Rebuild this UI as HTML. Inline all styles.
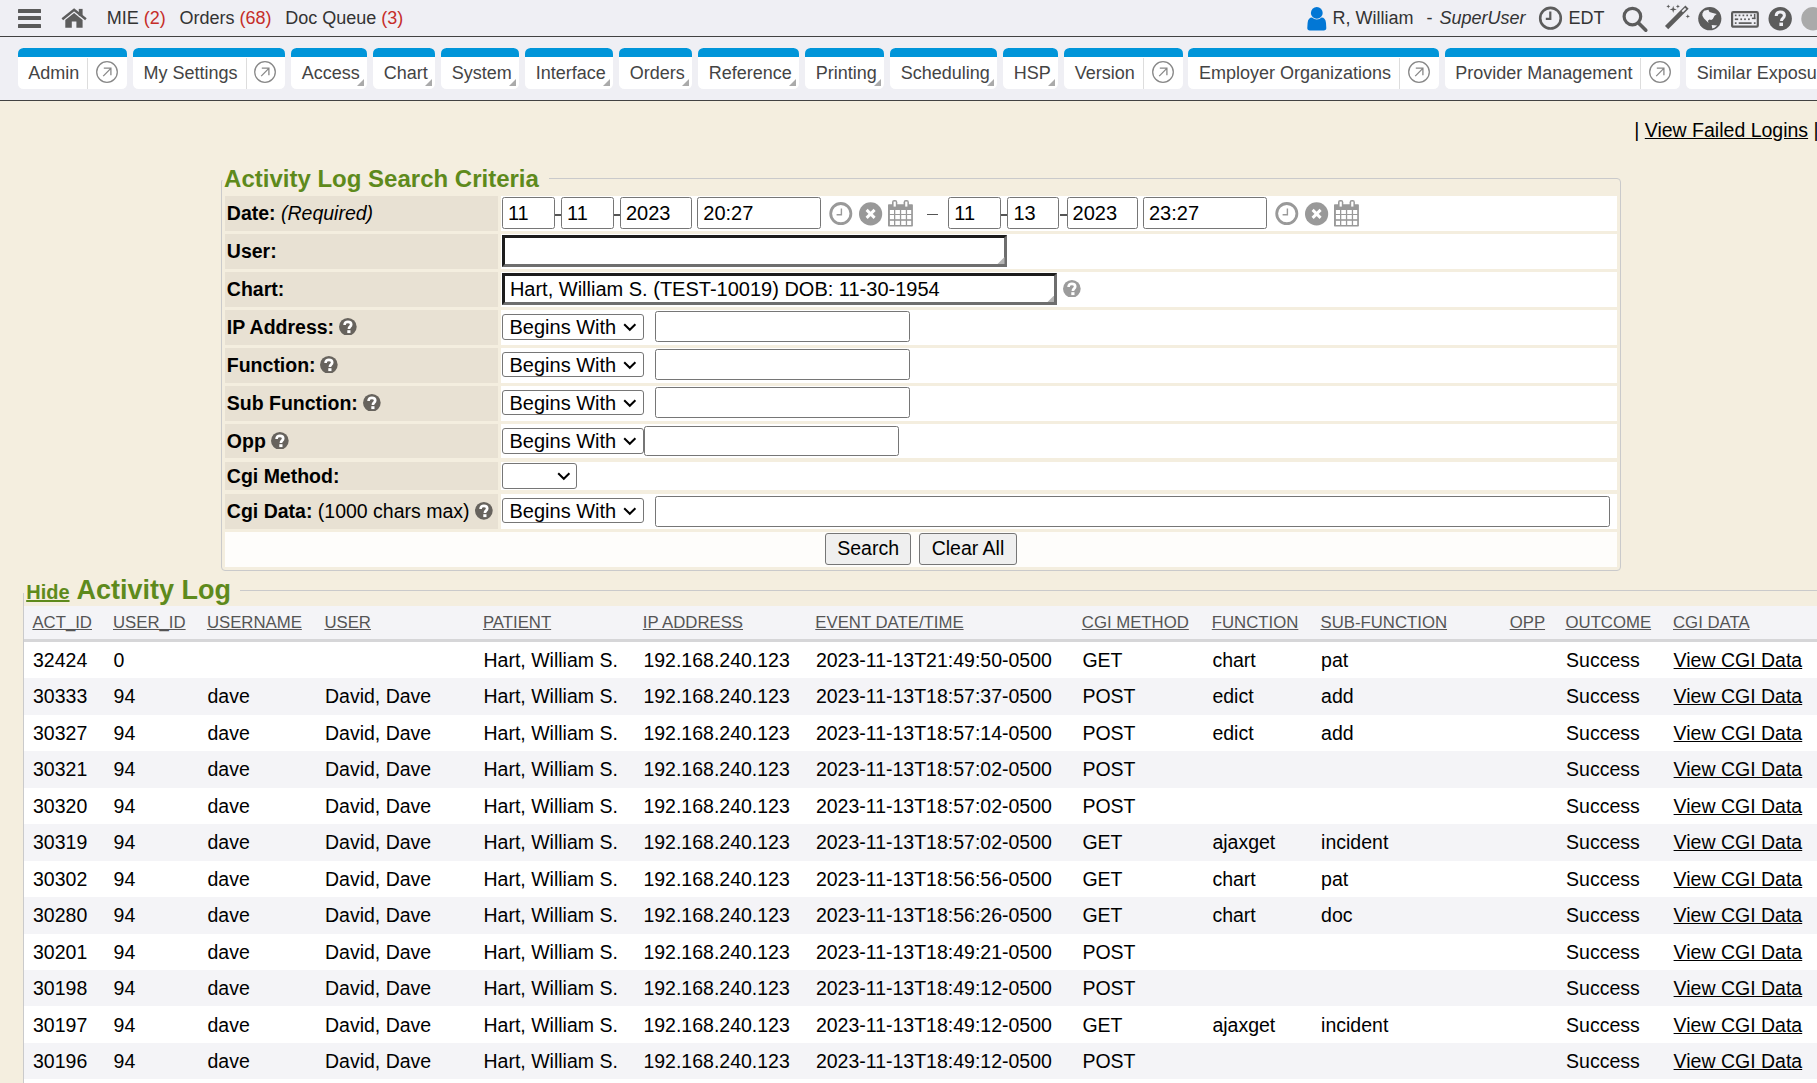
<!DOCTYPE html><html><head><meta charset="utf-8"><style>
html,body{margin:0;padding:0;}
body{width:1817px;height:1083px;overflow:hidden;position:relative;background:#f4eedf;font-family:'Liberation Sans', sans-serif;}
</style></head><body>
<div style="position:absolute;left:0.00px;top:0.00px;width:1817.00px;height:36.00px;background:#efeff4"></div>
<div style="position:absolute;left:0.00px;top:36.00px;width:1817.00px;height:1.00px;background:#424242"></div>
<div style="position:absolute;left:0.00px;top:37.00px;width:1817.00px;height:63.00px;background:#efeff4"></div>
<div style="position:absolute;left:0.00px;top:100.00px;width:1817.00px;height:1.00px;background:#424242"></div>
<div style="position:absolute;left:18.00px;top:9.00px;width:23.00px;height:3.60px;background:#5a5a5a;border-radius:0.6px"></div>
<div style="position:absolute;left:18.00px;top:16.20px;width:23.00px;height:3.60px;background:#5a5a5a;border-radius:0.6px"></div>
<div style="position:absolute;left:18.00px;top:24.10px;width:23.00px;height:3.60px;background:#5a5a5a;border-radius:0.6px"></div>
<svg style="position:absolute;left:56.00px;top:4.00px" width="36" height="28" viewBox="0 0 36 28"><path d="M6.3 15.2 L18.1 5.8 L29.9 15.2" fill="none" stroke="#5d5d5d" stroke-width="2.5"/><rect x="22.8" y="4.9" width="3.8" height="6.8" fill="#5d5d5d"/><path fill="#5d5d5d" d="M9.3 16.0 L18.1 9.0 L26.6 16.0 L26.6 23.8 L20.4 23.8 L20.4 17.6 L15.8 17.6 L15.8 23.8 L9.3 23.8 Z"/></svg>
<div style="position:absolute;left:106.70px;top:7.90px;font-size:18px;line-height:20px;font-weight:normal;font-style:normal;color:#333333;white-space:pre;">MIE <span style="color:#c62d28">(2)</span></div>
<div style="position:absolute;left:179.50px;top:7.90px;font-size:18px;line-height:20px;font-weight:normal;font-style:normal;color:#333333;white-space:pre;">Orders <span style="color:#c62d28">(68)</span></div>
<div style="position:absolute;left:285.30px;top:7.90px;font-size:18px;line-height:20px;font-weight:normal;font-style:normal;color:#333333;white-space:pre;">Doc Queue <span style="color:#c62d28">(3)</span></div>
<svg style="position:absolute;left:1307.00px;top:6.50px" width="20" height="24" viewBox="0 0 20 24"><circle cx="9.8" cy="5.9" r="5.9" fill="#0277d5"/><path fill="#0277d5" d="M0.3 21 L0.6 16 C0.9 12.5 2.5 10.6 5 10.6 C6.6 11.9 8 12.5 9.8 12.5 C11.6 12.5 13 11.9 14.6 10.6 C17.1 10.6 18.7 12.5 19 16 L19.3 21 C19.4 22.6 18.4 23.4 16.8 23.4 L2.8 23.4 C1.2 23.4 0.2 22.6 0.3 21 Z"/></svg>
<div style="position:absolute;left:1332.40px;top:7.80px;font-size:18px;line-height:20px;font-weight:normal;font-style:normal;color:#333333;white-space:pre;">R, William</div>
<div style="position:absolute;left:1426.50px;top:7.80px;font-size:18px;line-height:20px;font-weight:normal;font-style:normal;color:#333333;white-space:pre;">-</div>
<div style="position:absolute;left:1439.50px;top:7.80px;font-size:18px;line-height:20px;font-weight:normal;font-style:normal;color:#333333;white-space:pre;"><i>SuperUser</i></div>
<svg style="position:absolute;left:1538.00px;top:6.00px" width="26" height="26" viewBox="0 0 26 26"><circle cx="12.5" cy="12.2" r="10.3" fill="none" stroke="#5c5c5c" stroke-width="2.6"/><path d="M12.3 5.5 V12.8 H7.8" fill="none" stroke="#5c5c5c" stroke-width="2.2"/></svg>
<div style="position:absolute;left:1568.50px;top:8.00px;font-size:18px;line-height:20px;font-weight:normal;font-style:normal;color:#333333;white-space:pre;">EDT</div>
<svg style="position:absolute;left:1622.00px;top:6.00px" width="27" height="27" viewBox="0 0 27 27"><circle cx="10.4" cy="10.6" r="8.3" fill="none" stroke="#5c5c5c" stroke-width="3.2"/><path d="M16.5 17 L23.8 24.2" stroke="#5c5c5c" stroke-width="3.6" stroke-linecap="round"/></svg>
<svg style="position:absolute;left:1660.00px;top:0.00px" width="32" height="32" viewBox="0 0 32 32"><path d="M6.6 27.6 L27 7.2" stroke="#5c5c5c" stroke-width="4.6"/><path d="M22.3 11.7 L25.6 8.4" stroke="#efeff4" stroke-width="1.9"/><path fill="#5c5c5c" d="M13.2 5.800000000000001 L14.0 8.6 L16.8 9.4 L14.0 10.200000000000001 L13.2 13.0 L12.399999999999999 10.200000000000001 L9.6 9.4 L12.399999999999999 8.6 Z"/><path fill="#5c5c5c" d="M8.3 4.4 L8.850000000000001 5.8500000000000005 L10.3 6.4 L8.850000000000001 6.95 L8.3 8.4 L7.750000000000001 6.95 L6.300000000000001 6.4 L7.750000000000001 5.8500000000000005 Z"/><path fill="#5c5c5c" d="M17.9 4.4 L18.45 5.8500000000000005 L19.9 6.4 L18.45 6.95 L17.9 8.4 L17.349999999999998 6.95 L15.899999999999999 6.4 L17.349999999999998 5.8500000000000005 Z"/><path fill="#5c5c5c" d="M27.8 14.2 L28.400000000000002 15.799999999999999 L30.0 16.4 L28.400000000000002 17.0 L27.8 18.599999999999998 L27.2 17.0 L25.6 16.4 L27.2 15.799999999999999 Z"/></svg>
<svg style="position:absolute;left:1698.00px;top:6.50px" width="24" height="24" viewBox="0 0 24 24"><circle cx="11.8" cy="11.7" r="11.6" fill="#5c5c5c"/><path fill="#efeff4" d="M4.4 6.5 L6.0 3.8 L10.4 2.7 L11.5 4.9 L14.8 6.0 L18.7 7.1 L16.5 8.7 L14.8 12.0 L13.2 13.1 L11.5 12.6 L9.9 13.7 L10.6 15.9 L8.8 14.2 L6.0 11.5 L4.4 8.7 Z M13.7 18.1 L19.2 18.6 L16.5 20.8 L14.3 21.6 Z"/></svg>
<svg style="position:absolute;left:1730.00px;top:10.80px" width="31" height="18" viewBox="0 0 31 18"><rect x="2.1" y="1.1" width="25.7" height="14.6" rx="1.2" fill="none" stroke="#5c5c5c" stroke-width="2.2"/><g fill="#5c5c5c"><rect x="4.8500000000000005" y="3.55" width="1.7" height="1.7"/><rect x="8.65" y="3.55" width="1.7" height="1.7"/><rect x="12.55" y="3.55" width="1.7" height="1.7"/><rect x="16.349999999999998" y="3.55" width="1.7" height="1.7"/><rect x="20.25" y="3.55" width="1.7" height="1.7"/><rect x="23.9" y="2.9" width="1.5" height="5.2"/><rect x="21.9" y="6.6" width="3.5" height="1.5"/><rect x="4.8" y="7.4" width="3.4" height="1.7"/><rect x="10.35" y="7.4" width="1.7" height="1.7"/><rect x="14.15" y="7.4" width="1.7" height="1.7"/><rect x="18.049999999999997" y="7.4" width="1.7" height="1.7"/><rect x="4.85" y="11.25" width="1.7" height="1.7"/><rect x="8.7" y="11.25" width="12.9" height="1.7"/><rect x="23.85" y="11.25" width="1.7" height="1.7"/></g></svg>
<svg style="position:absolute;left:1768.00px;top:6.50px" width="25" height="24" viewBox="0 0 25 24"><circle cx="12.2" cy="11.8" r="11.7" fill="#5c5c5c"/><path d="M8.2 9 C8.2 6.2 10 5 12.3 5 C14.8 5 16.4 6.5 16.4 8.6 C16.4 11 13.6 11.5 13.6 13.2 L13.6 14" fill="none" stroke="#efeff4" stroke-width="3"/><rect x="11.4" y="15.6" width="3.6" height="3.4" fill="#efeff4"/></svg>
<svg style="position:absolute;left:1800.00px;top:6.50px" width="17" height="24" viewBox="0 0 17 24"><circle cx="13" cy="11.8" r="11.7" fill="#aaaaaa"/></svg>
<div style="position:absolute;left:17.70px;top:47.5px;width:109.43px;height:41.40px;background:#fff;border-radius:5.5px;overflow:hidden"><div style="position:absolute;left:0;top:0;right:0;height:9.50px;background:#0095d9"></div></div>
<div style="position:absolute;left:28.20px;top:63.00px;font-size:18px;line-height:20px;font-weight:normal;font-style:normal;color:#444444;white-space:pre;">Admin</div>
<div style="position:absolute;left:87.23px;top:58.00px;width:1.00px;height:30.90px;background:#dddddd"></div>
<svg style="position:absolute;left:95.03px;top:60.00px" width="24" height="24" viewBox="0 0 24 24"><circle cx="12" cy="12" r="10.3" fill="none" stroke="#888888" stroke-width="1.3"/><path d="M8.2 16.1 L15.6 8.6 M8.8 8.2 H15.9 V15.3" fill="none" stroke="#888888" stroke-width="1.3"/></svg>
<div style="position:absolute;left:132.98px;top:47.5px;width:152.45px;height:41.40px;background:#fff;border-radius:5.5px;overflow:hidden"><div style="position:absolute;left:0;top:0;right:0;height:9.50px;background:#0095d9"></div></div>
<div style="position:absolute;left:143.48px;top:63.00px;font-size:18px;line-height:20px;font-weight:normal;font-style:normal;color:#444444;white-space:pre;">My Settings</div>
<div style="position:absolute;left:245.53px;top:58.00px;width:1.00px;height:30.90px;background:#dddddd"></div>
<svg style="position:absolute;left:253.33px;top:60.00px" width="24" height="24" viewBox="0 0 24 24"><circle cx="12" cy="12" r="10.3" fill="none" stroke="#888888" stroke-width="1.3"/><path d="M8.2 16.1 L15.6 8.6 M8.8 8.2 H15.9 V15.3" fill="none" stroke="#888888" stroke-width="1.3"/></svg>
<div style="position:absolute;left:291.28px;top:47.5px;width:76.13px;height:41.40px;background:#fff;border-radius:5.5px;overflow:hidden"><div style="position:absolute;left:0;top:0;right:0;height:9.50px;background:#0095d9"></div></div>
<div style="position:absolute;left:301.78px;top:63.00px;font-size:18px;line-height:20px;font-weight:normal;font-style:normal;color:#444444;white-space:pre;">Access</div>
<svg style="position:absolute;left:357.41px;top:79.00px" width="7" height="7" viewBox="0 0 7 7"><path d="M7 0 L7 7 L0 7 Z" fill="#aaaaaa"/></svg>
<div style="position:absolute;left:373.26px;top:47.5px;width:62.12px;height:41.40px;background:#fff;border-radius:5.5px;overflow:hidden"><div style="position:absolute;left:0;top:0;right:0;height:9.50px;background:#0095d9"></div></div>
<div style="position:absolute;left:383.76px;top:63.00px;font-size:18px;line-height:20px;font-weight:normal;font-style:normal;color:#444444;white-space:pre;">Chart</div>
<svg style="position:absolute;left:425.38px;top:79.00px" width="7" height="7" viewBox="0 0 7 7"><path d="M7 0 L7 7 L0 7 Z" fill="#aaaaaa"/></svg>
<div style="position:absolute;left:441.23px;top:47.5px;width:78.12px;height:41.40px;background:#fff;border-radius:5.5px;overflow:hidden"><div style="position:absolute;left:0;top:0;right:0;height:9.50px;background:#0095d9"></div></div>
<div style="position:absolute;left:451.73px;top:63.00px;font-size:18px;line-height:20px;font-weight:normal;font-style:normal;color:#444444;white-space:pre;">System</div>
<svg style="position:absolute;left:509.35px;top:79.00px" width="7" height="7" viewBox="0 0 7 7"><path d="M7 0 L7 7 L0 7 Z" fill="#aaaaaa"/></svg>
<div style="position:absolute;left:525.20px;top:47.5px;width:88.15px;height:41.40px;background:#fff;border-radius:5.5px;overflow:hidden"><div style="position:absolute;left:0;top:0;right:0;height:9.50px;background:#0095d9"></div></div>
<div style="position:absolute;left:535.70px;top:63.00px;font-size:18px;line-height:20px;font-weight:normal;font-style:normal;color:#444444;white-space:pre;">Interface</div>
<svg style="position:absolute;left:603.35px;top:79.00px" width="7" height="7" viewBox="0 0 7 7"><path d="M7 0 L7 7 L0 7 Z" fill="#aaaaaa"/></svg>
<div style="position:absolute;left:619.20px;top:47.5px;width:73.12px;height:41.40px;background:#fff;border-radius:5.5px;overflow:hidden"><div style="position:absolute;left:0;top:0;right:0;height:9.50px;background:#0095d9"></div></div>
<div style="position:absolute;left:629.70px;top:63.00px;font-size:18px;line-height:20px;font-weight:normal;font-style:normal;color:#444444;white-space:pre;">Orders</div>
<svg style="position:absolute;left:682.32px;top:79.00px" width="7" height="7" viewBox="0 0 7 7"><path d="M7 0 L7 7 L0 7 Z" fill="#aaaaaa"/></svg>
<div style="position:absolute;left:698.17px;top:47.5px;width:101.16px;height:41.40px;background:#fff;border-radius:5.5px;overflow:hidden"><div style="position:absolute;left:0;top:0;right:0;height:9.50px;background:#0095d9"></div></div>
<div style="position:absolute;left:708.67px;top:63.00px;font-size:18px;line-height:20px;font-weight:normal;font-style:normal;color:#444444;white-space:pre;">Reference</div>
<svg style="position:absolute;left:789.33px;top:79.00px" width="7" height="7" viewBox="0 0 7 7"><path d="M7 0 L7 7 L0 7 Z" fill="#aaaaaa"/></svg>
<div style="position:absolute;left:805.18px;top:47.5px;width:79.13px;height:41.40px;background:#fff;border-radius:5.5px;overflow:hidden"><div style="position:absolute;left:0;top:0;right:0;height:9.50px;background:#0095d9"></div></div>
<div style="position:absolute;left:815.68px;top:63.00px;font-size:18px;line-height:20px;font-weight:normal;font-style:normal;color:#444444;white-space:pre;">Printing</div>
<svg style="position:absolute;left:874.31px;top:79.00px" width="7" height="7" viewBox="0 0 7 7"><path d="M7 0 L7 7 L0 7 Z" fill="#aaaaaa"/></svg>
<div style="position:absolute;left:890.16px;top:47.5px;width:107.18px;height:41.40px;background:#fff;border-radius:5.5px;overflow:hidden"><div style="position:absolute;left:0;top:0;right:0;height:9.50px;background:#0095d9"></div></div>
<div style="position:absolute;left:900.66px;top:63.00px;font-size:18px;line-height:20px;font-weight:normal;font-style:normal;color:#444444;white-space:pre;">Scheduling</div>
<svg style="position:absolute;left:987.34px;top:79.00px" width="7" height="7" viewBox="0 0 7 7"><path d="M7 0 L7 7 L0 7 Z" fill="#aaaaaa"/></svg>
<div style="position:absolute;left:1003.19px;top:47.5px;width:55.12px;height:41.40px;background:#fff;border-radius:5.5px;overflow:hidden"><div style="position:absolute;left:0;top:0;right:0;height:9.50px;background:#0095d9"></div></div>
<div style="position:absolute;left:1013.69px;top:63.00px;font-size:18px;line-height:20px;font-weight:normal;font-style:normal;color:#444444;white-space:pre;">HSP</div>
<svg style="position:absolute;left:1048.31px;top:79.00px" width="7" height="7" viewBox="0 0 7 7"><path d="M7 0 L7 7 L0 7 Z" fill="#aaaaaa"/></svg>
<div style="position:absolute;left:1064.16px;top:47.5px;width:118.45px;height:41.40px;background:#fff;border-radius:5.5px;overflow:hidden"><div style="position:absolute;left:0;top:0;right:0;height:9.50px;background:#0095d9"></div></div>
<div style="position:absolute;left:1074.66px;top:63.00px;font-size:18px;line-height:20px;font-weight:normal;font-style:normal;color:#444444;white-space:pre;">Version</div>
<div style="position:absolute;left:1142.71px;top:58.00px;width:1.00px;height:30.90px;background:#dddddd"></div>
<svg style="position:absolute;left:1150.51px;top:60.00px" width="24" height="24" viewBox="0 0 24 24"><circle cx="12" cy="12" r="10.3" fill="none" stroke="#888888" stroke-width="1.3"/><path d="M8.2 16.1 L15.6 8.6 M8.8 8.2 H15.9 V15.3" fill="none" stroke="#888888" stroke-width="1.3"/></svg>
<div style="position:absolute;left:1188.46px;top:47.5px;width:250.49px;height:41.40px;background:#fff;border-radius:5.5px;overflow:hidden"><div style="position:absolute;left:0;top:0;right:0;height:9.50px;background:#0095d9"></div></div>
<div style="position:absolute;left:1198.96px;top:63.00px;font-size:18px;line-height:20px;font-weight:normal;font-style:normal;color:#444444;white-space:pre;">Employer Organizations</div>
<div style="position:absolute;left:1399.05px;top:58.00px;width:1.00px;height:30.90px;background:#dddddd"></div>
<svg style="position:absolute;left:1406.85px;top:60.00px" width="24" height="24" viewBox="0 0 24 24"><circle cx="12" cy="12" r="10.3" fill="none" stroke="#888888" stroke-width="1.3"/><path d="M8.2 16.1 L15.6 8.6 M8.8 8.2 H15.9 V15.3" fill="none" stroke="#888888" stroke-width="1.3"/></svg>
<div style="position:absolute;left:1444.80px;top:47.5px;width:235.49px;height:41.40px;background:#fff;border-radius:5.5px;overflow:hidden"><div style="position:absolute;left:0;top:0;right:0;height:9.50px;background:#0095d9"></div></div>
<div style="position:absolute;left:1455.30px;top:63.00px;font-size:18px;line-height:20px;font-weight:normal;font-style:normal;color:#444444;white-space:pre;">Provider Management</div>
<div style="position:absolute;left:1640.39px;top:58.00px;width:1.00px;height:30.90px;background:#dddddd"></div>
<svg style="position:absolute;left:1648.19px;top:60.00px" width="24" height="24" viewBox="0 0 24 24"><circle cx="12" cy="12" r="10.3" fill="none" stroke="#888888" stroke-width="1.3"/><path d="M8.2 16.1 L15.6 8.6 M8.8 8.2 H15.9 V15.3" fill="none" stroke="#888888" stroke-width="1.3"/></svg>
<div style="position:absolute;left:1686.14px;top:47.5px;width:203.45px;height:41.40px;background:#fff;border-radius:5.5px;overflow:hidden"><div style="position:absolute;left:0;top:0;right:0;height:9.50px;background:#0095d9"></div></div>
<div style="position:absolute;left:1696.64px;top:63.00px;font-size:18px;line-height:20px;font-weight:normal;font-style:normal;color:#444444;white-space:pre;">Similar Exposures</div>
<div style="position:absolute;left:1849.69px;top:58.00px;width:1.00px;height:30.90px;background:#dddddd"></div>
<svg style="position:absolute;left:1857.49px;top:60.00px" width="24" height="24" viewBox="0 0 24 24"><circle cx="12" cy="12" r="10.3" fill="none" stroke="#888888" stroke-width="1.3"/><path d="M8.2 16.1 L15.6 8.6 M8.8 8.2 H15.9 V15.3" fill="none" stroke="#888888" stroke-width="1.3"/></svg>
<div style="position:absolute;left:1634.30px;top:118.60px;font-size:19.5px;line-height:22px;font-weight:normal;font-style:normal;color:#000;white-space:pre;">| <span style="text-decoration:underline">View Failed Logins</span> |</div>
<div style="position:absolute;left:221px;top:178px;width:1398.4px;height:390.6px;border:1px solid #cacacb;border-radius:4px"></div>
<div style="position:absolute;left:218.00px;top:165.00px;width:331.00px;height:15.00px;background:#f4eedf"></div>
<div style="position:absolute;left:224.10px;top:164.70px;font-size:24px;line-height:27px;font-weight:bold;font-style:normal;color:#5e8a1c;white-space:pre;">Activity Log Search Criteria</div>
<div style="position:absolute;left:225.00px;top:196.00px;width:273.00px;height:35.00px;background:#e8e1d3"></div>
<div style="position:absolute;left:501.20px;top:196.00px;width:1115.80px;height:35.00px;background:#ffffff"></div>
<div style="position:absolute;left:225.00px;top:234.20px;width:273.00px;height:34.40px;background:#e8e1d3"></div>
<div style="position:absolute;left:501.20px;top:234.20px;width:1115.80px;height:34.40px;background:#ffffff"></div>
<div style="position:absolute;left:225.00px;top:272.30px;width:273.00px;height:34.30px;background:#e8e1d3"></div>
<div style="position:absolute;left:501.20px;top:272.30px;width:1115.80px;height:34.30px;background:#ffffff"></div>
<div style="position:absolute;left:225.00px;top:310.30px;width:273.00px;height:34.40px;background:#e8e1d3"></div>
<div style="position:absolute;left:501.20px;top:310.30px;width:1115.80px;height:34.40px;background:#ffffff"></div>
<div style="position:absolute;left:225.00px;top:348.10px;width:273.00px;height:34.70px;background:#e8e1d3"></div>
<div style="position:absolute;left:501.20px;top:348.10px;width:1115.80px;height:34.70px;background:#ffffff"></div>
<div style="position:absolute;left:225.00px;top:386.10px;width:273.00px;height:34.50px;background:#e8e1d3"></div>
<div style="position:absolute;left:501.20px;top:386.10px;width:1115.80px;height:34.50px;background:#ffffff"></div>
<div style="position:absolute;left:225.00px;top:424.30px;width:273.00px;height:34.20px;background:#e8e1d3"></div>
<div style="position:absolute;left:501.20px;top:424.30px;width:1115.80px;height:34.20px;background:#ffffff"></div>
<div style="position:absolute;left:225.00px;top:462.10px;width:273.00px;height:28.30px;background:#e8e1d3"></div>
<div style="position:absolute;left:501.20px;top:462.10px;width:1115.80px;height:28.30px;background:#ffffff"></div>
<div style="position:absolute;left:225.00px;top:494.10px;width:273.00px;height:34.50px;background:#e8e1d3"></div>
<div style="position:absolute;left:501.20px;top:494.10px;width:1115.80px;height:34.50px;background:#ffffff"></div>
<div style="position:absolute;left:225.00px;top:531.70px;width:1392.00px;height:35.10px;background:#fefdfb"></div>
<div style="position:absolute;left:226.80px;top:201.80px;font-size:19.5px;line-height:22px;font-weight:normal;font-style:normal;color:#000;white-space:pre;"><b>Date:</b> <i>(Required)</i></div>
<div style="position:absolute;left:226.80px;top:240.00px;font-size:19.5px;line-height:22px;font-weight:normal;font-style:normal;color:#000;white-space:pre;"><b>User:</b></div>
<div style="position:absolute;left:226.80px;top:278.10px;font-size:19.5px;line-height:22px;font-weight:normal;font-style:normal;color:#000;white-space:pre;"><b>Chart:</b></div>
<div style="position:absolute;left:226.80px;top:316.10px;font-size:19.5px;line-height:22px;font-weight:normal;font-style:normal;color:#000;white-space:pre;"><b>IP Address:</b></div>
<svg style="position:absolute;left:339.20px;top:317.60px" width="17.7" height="17.7" viewBox="0 0 17.7 17.7"><circle cx="8.85" cy="8.85" r="8.85" fill="#67635d"/><path d="M5.6 6.9 C5.6 4.9 7 3.8 8.9 3.8 C10.9 3.8 12.2 5 12.2 6.6 C12.2 8.6 10 8.9 10 10.4 L10 11" fill="none" stroke="#fff" stroke-width="2.7"/><rect x="8.3" y="12.2" width="3.2" height="2.9" fill="#fff"/></svg>
<div style="position:absolute;left:226.80px;top:353.90px;font-size:19.5px;line-height:22px;font-weight:normal;font-style:normal;color:#000;white-space:pre;"><b>Function:</b></div>
<svg style="position:absolute;left:320.40px;top:355.60px" width="17.7" height="17.7" viewBox="0 0 17.7 17.7"><circle cx="8.85" cy="8.85" r="8.85" fill="#67635d"/><path d="M5.6 6.9 C5.6 4.9 7 3.8 8.9 3.8 C10.9 3.8 12.2 5 12.2 6.6 C12.2 8.6 10 8.9 10 10.4 L10 11" fill="none" stroke="#fff" stroke-width="2.7"/><rect x="8.3" y="12.2" width="3.2" height="2.9" fill="#fff"/></svg>
<div style="position:absolute;left:226.80px;top:391.90px;font-size:19.5px;line-height:22px;font-weight:normal;font-style:normal;color:#000;white-space:pre;"><b>Sub Function:</b></div>
<svg style="position:absolute;left:362.90px;top:393.60px" width="17.7" height="17.7" viewBox="0 0 17.7 17.7"><circle cx="8.85" cy="8.85" r="8.85" fill="#67635d"/><path d="M5.6 6.9 C5.6 4.9 7 3.8 8.9 3.8 C10.9 3.8 12.2 5 12.2 6.6 C12.2 8.6 10 8.9 10 10.4 L10 11" fill="none" stroke="#fff" stroke-width="2.7"/><rect x="8.3" y="12.2" width="3.2" height="2.9" fill="#fff"/></svg>
<div style="position:absolute;left:226.80px;top:430.10px;font-size:19.5px;line-height:22px;font-weight:normal;font-style:normal;color:#000;white-space:pre;"><b>Opp</b></div>
<svg style="position:absolute;left:271.00px;top:431.60px" width="17.7" height="17.7" viewBox="0 0 17.7 17.7"><circle cx="8.85" cy="8.85" r="8.85" fill="#67635d"/><path d="M5.6 6.9 C5.6 4.9 7 3.8 8.9 3.8 C10.9 3.8 12.2 5 12.2 6.6 C12.2 8.6 10 8.9 10 10.4 L10 11" fill="none" stroke="#fff" stroke-width="2.7"/><rect x="8.3" y="12.2" width="3.2" height="2.9" fill="#fff"/></svg>
<div style="position:absolute;left:226.80px;top:465.00px;font-size:19.5px;line-height:22px;font-weight:normal;font-style:normal;color:#000;white-space:pre;"><b>Cgi Method:</b></div>
<div style="position:absolute;left:226.80px;top:500.30px;font-size:19.5px;line-height:22px;font-weight:normal;font-style:normal;color:#000;white-space:pre;"><b>Cgi Data:</b> (1000 chars max)</div>
<svg style="position:absolute;left:475.00px;top:502.00px" width="17.7" height="17.7" viewBox="0 0 17.7 17.7"><circle cx="8.85" cy="8.85" r="8.85" fill="#67635d"/><path d="M5.6 6.9 C5.6 4.9 7 3.8 8.9 3.8 C10.9 3.8 12.2 5 12.2 6.6 C12.2 8.6 10 8.9 10 10.4 L10 11" fill="none" stroke="#fff" stroke-width="2.7"/><rect x="8.3" y="12.2" width="3.2" height="2.9" fill="#fff"/></svg>
<div style="position:absolute;left:501.90px;top:197.20px;width:52.90px;height:31.50px;box-sizing:border-box;background:#fff;border:1px solid #767676;border-radius:2.5px"></div>
<div style="position:absolute;left:507.90px;top:201.70px;font-size:20px;line-height:22px;font-weight:normal;font-style:normal;color:#000;white-space:pre;">11</div>
<div style="position:absolute;left:561.10px;top:197.20px;width:52.50px;height:31.50px;box-sizing:border-box;background:#fff;border:1px solid #767676;border-radius:2.5px"></div>
<div style="position:absolute;left:567.10px;top:201.70px;font-size:20px;line-height:22px;font-weight:normal;font-style:normal;color:#000;white-space:pre;">11</div>
<div style="position:absolute;left:620.00px;top:197.20px;width:71.50px;height:31.50px;box-sizing:border-box;background:#fff;border:1px solid #767676;border-radius:2.5px"></div>
<div style="position:absolute;left:626.00px;top:201.70px;font-size:20px;line-height:22px;font-weight:normal;font-style:normal;color:#000;white-space:pre;">2023</div>
<div style="position:absolute;left:554.80px;top:213.90px;width:6.30px;height:1.80px;background:#555"></div>
<div style="position:absolute;left:613.60px;top:213.90px;width:6.40px;height:1.80px;background:#555"></div>
<div style="position:absolute;left:697.30px;top:197.20px;width:123.30px;height:31.50px;box-sizing:border-box;background:#fff;border:1px solid #767676;border-radius:2.5px"></div>
<div style="position:absolute;left:703.30px;top:201.70px;font-size:20px;line-height:22px;font-weight:normal;font-style:normal;color:#000;white-space:pre;">20:27</div>
<svg style="position:absolute;left:829.00px;top:201.50px" width="24" height="24" viewBox="0 0 24 24"><circle cx="11.8" cy="11.6" r="10.1" fill="none" stroke="#999999" stroke-width="2.8"/><path d="M12.4 6.4 V12.7 H7.6" fill="none" stroke="#999999" stroke-width="1.4"/></svg>
<svg style="position:absolute;left:859.00px;top:201.50px" width="24" height="24" viewBox="0 0 24 24"><circle cx="11.6" cy="11.9" r="11.6" fill="#999999"/><path d="M7.6 7.9 L15.6 15.9 M15.6 7.9 L7.6 15.9" stroke="#fff" stroke-width="2.9"/></svg>
<svg style="position:absolute;left:888.40px;top:200.00px" width="25" height="27" viewBox="0 0 25 27"><rect x="0" y="4.2" width="24.9" height="22.4" rx="0.8" fill="#999999"/><rect x="1.9" y="10" width="4.10" height="4.00" fill="#fff"/><rect x="1.9" y="15" width="4.10" height="4.20" fill="#fff"/><rect x="1.9" y="20.8" width="4.10" height="4.20" fill="#fff"/><rect x="7.3" y="10" width="4.60" height="4.00" fill="#fff"/><rect x="7.3" y="15" width="4.60" height="4.20" fill="#fff"/><rect x="7.3" y="20.8" width="4.60" height="4.20" fill="#fff"/><rect x="13.2" y="10" width="4.60" height="4.00" fill="#fff"/><rect x="13.2" y="15" width="4.60" height="4.20" fill="#fff"/><rect x="13.2" y="20.8" width="4.60" height="4.20" fill="#fff"/><rect x="19.1" y="10" width="4.10" height="4.00" fill="#fff"/><rect x="19.1" y="15" width="4.10" height="4.20" fill="#fff"/><rect x="19.1" y="20.8" width="4.10" height="4.20" fill="#fff"/><rect x="4" y="0" width="5.3" height="7.6" rx="2.2" fill="#999999"/><rect x="5.6" y="1.6" width="2.2" height="5" fill="#fff"/><rect x="15.6" y="0" width="5.3" height="7.6" rx="2.2" fill="#999999"/><rect x="17.2" y="1.6" width="2.2" height="5" fill="#fff"/></svg>
<div style="position:absolute;left:927.00px;top:213.60px;width:10.50px;height:1.80px;background:#555"></div>
<div style="position:absolute;left:948.30px;top:197.20px;width:52.50px;height:31.50px;box-sizing:border-box;background:#fff;border:1px solid #767676;border-radius:2.5px"></div>
<div style="position:absolute;left:954.30px;top:201.70px;font-size:20px;line-height:22px;font-weight:normal;font-style:normal;color:#000;white-space:pre;">11</div>
<div style="position:absolute;left:1007.40px;top:197.20px;width:52.10px;height:31.50px;box-sizing:border-box;background:#fff;border:1px solid #767676;border-radius:2.5px"></div>
<div style="position:absolute;left:1013.40px;top:201.70px;font-size:20px;line-height:22px;font-weight:normal;font-style:normal;color:#000;white-space:pre;">13</div>
<div style="position:absolute;left:1066.60px;top:197.20px;width:71.00px;height:31.50px;box-sizing:border-box;background:#fff;border:1px solid #767676;border-radius:2.5px"></div>
<div style="position:absolute;left:1072.60px;top:201.70px;font-size:20px;line-height:22px;font-weight:normal;font-style:normal;color:#000;white-space:pre;">2023</div>
<div style="position:absolute;left:1000.80px;top:213.90px;width:6.60px;height:1.80px;background:#555"></div>
<div style="position:absolute;left:1059.50px;top:213.90px;width:7.10px;height:1.80px;background:#555"></div>
<div style="position:absolute;left:1143.00px;top:197.20px;width:124.00px;height:31.50px;box-sizing:border-box;background:#fff;border:1px solid #767676;border-radius:2.5px"></div>
<div style="position:absolute;left:1149.00px;top:201.70px;font-size:20px;line-height:22px;font-weight:normal;font-style:normal;color:#000;white-space:pre;">23:27</div>
<svg style="position:absolute;left:1274.70px;top:201.50px" width="24" height="24" viewBox="0 0 24 24"><circle cx="11.8" cy="11.6" r="10.1" fill="none" stroke="#999999" stroke-width="2.8"/><path d="M12.4 6.4 V12.7 H7.6" fill="none" stroke="#999999" stroke-width="1.4"/></svg>
<svg style="position:absolute;left:1305.40px;top:201.50px" width="24" height="24" viewBox="0 0 24 24"><circle cx="11.6" cy="11.9" r="11.6" fill="#999999"/><path d="M7.6 7.9 L15.6 15.9 M15.6 7.9 L7.6 15.9" stroke="#fff" stroke-width="2.9"/></svg>
<svg style="position:absolute;left:1334.00px;top:200.00px" width="25" height="27" viewBox="0 0 25 27"><rect x="0" y="4.2" width="24.9" height="22.4" rx="0.8" fill="#999999"/><rect x="1.9" y="10" width="4.10" height="4.00" fill="#fff"/><rect x="1.9" y="15" width="4.10" height="4.20" fill="#fff"/><rect x="1.9" y="20.8" width="4.10" height="4.20" fill="#fff"/><rect x="7.3" y="10" width="4.60" height="4.00" fill="#fff"/><rect x="7.3" y="15" width="4.60" height="4.20" fill="#fff"/><rect x="7.3" y="20.8" width="4.60" height="4.20" fill="#fff"/><rect x="13.2" y="10" width="4.60" height="4.00" fill="#fff"/><rect x="13.2" y="15" width="4.60" height="4.20" fill="#fff"/><rect x="13.2" y="20.8" width="4.60" height="4.20" fill="#fff"/><rect x="19.1" y="10" width="4.10" height="4.00" fill="#fff"/><rect x="19.1" y="15" width="4.10" height="4.20" fill="#fff"/><rect x="19.1" y="20.8" width="4.10" height="4.20" fill="#fff"/><rect x="4" y="0" width="5.3" height="7.6" rx="2.2" fill="#999999"/><rect x="5.6" y="1.6" width="2.2" height="5" fill="#fff"/><rect x="15.6" y="0" width="5.3" height="7.6" rx="2.2" fill="#999999"/><rect x="17.2" y="1.6" width="2.2" height="5" fill="#fff"/></svg>
<div style="position:absolute;left:501.9px;top:234.9px;width:505.1px;height:31.900000000000006px;box-sizing:border-box;background:#fff;border-style:solid;border-width:3px;border-color:#1c1c1c #6e6e6e #6e6e6e #1c1c1c"></div>
<svg style="position:absolute;left:997.00px;top:256.80px" width="7.5" height="7.5" viewBox="0 0 7.5 7.5"><path d="M7.5 0 L7.5 7.5 L0 7.5Z" fill="#b4b4b4"/></svg>
<div style="position:absolute;left:502.2px;top:273.1px;width:554.5999999999999px;height:31.599999999999966px;box-sizing:border-box;background:#fff;border-style:solid;border-width:3px;border-color:#1c1c1c #6e6e6e #6e6e6e #1c1c1c"></div>
<svg style="position:absolute;left:1046.80px;top:294.70px" width="7.5" height="7.5" viewBox="0 0 7.5 7.5"><path d="M7.5 0 L7.5 7.5 L0 7.5Z" fill="#b4b4b4"/></svg>
<div style="position:absolute;left:509.90px;top:278.10px;font-size:20px;line-height:22px;font-weight:normal;font-style:normal;color:#000;white-space:pre;">Hart, William S. (TEST-10019) DOB: 11-30-1954</div>
<svg style="position:absolute;left:1063.20px;top:279.60px" width="17.7" height="17.7" viewBox="0 0 17.7 17.7"><circle cx="8.85" cy="8.85" r="8.85" fill="#9c9c9c"/><path d="M5.6 6.9 C5.6 4.9 7 3.8 8.9 3.8 C10.9 3.8 12.2 5 12.2 6.6 C12.2 8.6 10 8.9 10 10.4 L10 11" fill="none" stroke="#fff" stroke-width="2.7"/><rect x="8.3" y="12.2" width="3.2" height="2.9" fill="#fff"/></svg>
<div style="position:absolute;left:502.00px;top:314.40px;width:141.50px;height:25.20px;box-sizing:border-box;background:#fff;border:1px solid #767676;border-radius:3px"></div>
<div style="position:absolute;left:509.50px;top:316.10px;font-size:20px;line-height:22px;font-weight:normal;font-style:normal;color:#000;white-space:pre;">Begins With</div>
<svg style="position:absolute;left:623.00px;top:322.90px" width="14" height="9" viewBox="0 0 14 9"><path d="M1.2 1.2 L6.8 6.8 L12.4 1.2" fill="none" stroke="#000" stroke-width="2"/></svg>
<div style="position:absolute;left:655.20px;top:311.30px;width:254.50px;height:31.10px;box-sizing:border-box;background:#fff;border:1px solid #767676;border-radius:2.5px"></div>
<div style="position:absolute;left:502.00px;top:352.20px;width:141.50px;height:25.20px;box-sizing:border-box;background:#fff;border:1px solid #767676;border-radius:3px"></div>
<div style="position:absolute;left:509.50px;top:353.90px;font-size:20px;line-height:22px;font-weight:normal;font-style:normal;color:#000;white-space:pre;">Begins With</div>
<svg style="position:absolute;left:623.00px;top:360.70px" width="14" height="9" viewBox="0 0 14 9"><path d="M1.2 1.2 L6.8 6.8 L12.4 1.2" fill="none" stroke="#000" stroke-width="2"/></svg>
<div style="position:absolute;left:655.20px;top:349.10px;width:254.50px;height:31.10px;box-sizing:border-box;background:#fff;border:1px solid #767676;border-radius:2.5px"></div>
<div style="position:absolute;left:502.00px;top:390.20px;width:141.50px;height:25.20px;box-sizing:border-box;background:#fff;border:1px solid #767676;border-radius:3px"></div>
<div style="position:absolute;left:509.50px;top:391.90px;font-size:20px;line-height:22px;font-weight:normal;font-style:normal;color:#000;white-space:pre;">Begins With</div>
<svg style="position:absolute;left:623.00px;top:398.70px" width="14" height="9" viewBox="0 0 14 9"><path d="M1.2 1.2 L6.8 6.8 L12.4 1.2" fill="none" stroke="#000" stroke-width="2"/></svg>
<div style="position:absolute;left:655.20px;top:387.10px;width:254.50px;height:31.10px;box-sizing:border-box;background:#fff;border:1px solid #767676;border-radius:2.5px"></div>
<div style="position:absolute;left:502.00px;top:428.40px;width:141.50px;height:25.20px;box-sizing:border-box;background:#fff;border:1px solid #767676;border-radius:3px"></div>
<div style="position:absolute;left:509.50px;top:430.10px;font-size:20px;line-height:22px;font-weight:normal;font-style:normal;color:#000;white-space:pre;">Begins With</div>
<svg style="position:absolute;left:623.00px;top:436.90px" width="14" height="9" viewBox="0 0 14 9"><path d="M1.2 1.2 L6.8 6.8 L12.4 1.2" fill="none" stroke="#000" stroke-width="2"/></svg>
<div style="position:absolute;left:643.80px;top:425.60px;width:254.80px;height:30.90px;box-sizing:border-box;background:#fff;border:1px solid #767676;border-radius:2.5px"></div>
<div style="position:absolute;left:502.00px;top:463.20px;width:75.30px;height:25.60px;box-sizing:border-box;background:#fff;border:1px solid #767676;border-radius:3px"></div>
<svg style="position:absolute;left:556.80px;top:471.70px" width="14" height="9" viewBox="0 0 14 9"><path d="M1.2 1.2 L6.8 6.8 L12.4 1.2" fill="none" stroke="#000" stroke-width="2"/></svg>
<div style="position:absolute;left:502.00px;top:498.20px;width:141.50px;height:25.20px;box-sizing:border-box;background:#fff;border:1px solid #767676;border-radius:3px"></div>
<div style="position:absolute;left:509.50px;top:499.90px;font-size:20px;line-height:22px;font-weight:normal;font-style:normal;color:#000;white-space:pre;">Begins With</div>
<svg style="position:absolute;left:623.00px;top:506.70px" width="14" height="9" viewBox="0 0 14 9"><path d="M1.2 1.2 L6.8 6.8 L12.4 1.2" fill="none" stroke="#000" stroke-width="2"/></svg>
<div style="position:absolute;left:655.00px;top:496.00px;width:955.00px;height:31.00px;box-sizing:border-box;background:#fff;border:1px solid #767676;border-radius:2.5px"></div>
<div style="position:absolute;left:824.9px;top:533.3px;width:86.39999999999998px;height:31.40000000000009px;box-sizing:border-box;background:#efefef;border:1px solid #767676;border-radius:3px;font-size:19.5px;line-height:29.40000000000009px;text-align:center;color:#000">Search</div>
<div style="position:absolute;left:919.1px;top:533.3px;width:97.79999999999995px;height:31.40000000000009px;box-sizing:border-box;background:#efefef;border:1px solid #767676;border-radius:3px;font-size:19.5px;line-height:29.40000000000009px;text-align:center;color:#000">Clear All</div>
<div style="position:absolute;left:23.00px;top:590.00px;width:1794.00px;height:493.00px;border-left:1px solid #cacacb;border-top:1px solid #cacacb;box-sizing:border-box"></div>
<div style="position:absolute;left:20.00px;top:575.00px;width:219.60px;height:17.50px;background:#f4eedf"></div>
<div style="position:absolute;left:26.20px;top:581.10px;font-size:20px;line-height:22px;font-weight:bold;font-style:normal;color:#5e8a1c;white-space:pre;"><span style="text-decoration:underline">Hide</span></div>
<div style="position:absolute;left:76.50px;top:574.80px;font-size:27px;line-height:30px;font-weight:bold;font-style:normal;color:#5e8a1c;white-space:pre;">Activity Log</div>
<div style="position:absolute;left:24.00px;top:606.00px;width:1793.00px;height:33.00px;background:#f4f4f7"></div>
<div style="position:absolute;left:24.00px;top:639.00px;width:1793.00px;height:3.00px;background:#d6d6d8"></div>
<div style="position:absolute;left:32.40px;top:613.20px;font-size:16.75px;line-height:19px;font-weight:normal;font-style:normal;color:#555555;white-space:pre;text-decoration:underline">ACT_ID</div>
<div style="position:absolute;left:113.00px;top:613.20px;font-size:16.75px;line-height:19px;font-weight:normal;font-style:normal;color:#555555;white-space:pre;text-decoration:underline">USER_ID</div>
<div style="position:absolute;left:206.90px;top:613.20px;font-size:16.75px;line-height:19px;font-weight:normal;font-style:normal;color:#555555;white-space:pre;text-decoration:underline">USERNAME</div>
<div style="position:absolute;left:324.40px;top:613.20px;font-size:16.75px;line-height:19px;font-weight:normal;font-style:normal;color:#555555;white-space:pre;text-decoration:underline">USER</div>
<div style="position:absolute;left:482.90px;top:613.20px;font-size:16.75px;line-height:19px;font-weight:normal;font-style:normal;color:#555555;white-space:pre;text-decoration:underline">PATIENT</div>
<div style="position:absolute;left:642.80px;top:613.20px;font-size:16.75px;line-height:19px;font-weight:normal;font-style:normal;color:#555555;white-space:pre;text-decoration:underline">IP ADDRESS</div>
<div style="position:absolute;left:815.30px;top:613.20px;font-size:16.75px;line-height:19px;font-weight:normal;font-style:normal;color:#555555;white-space:pre;text-decoration:underline">EVENT DATE/TIME</div>
<div style="position:absolute;left:1081.80px;top:613.20px;font-size:16.75px;line-height:19px;font-weight:normal;font-style:normal;color:#555555;white-space:pre;text-decoration:underline">CGI METHOD</div>
<div style="position:absolute;left:1211.80px;top:613.20px;font-size:16.75px;line-height:19px;font-weight:normal;font-style:normal;color:#555555;white-space:pre;text-decoration:underline">FUNCTION</div>
<div style="position:absolute;left:1320.50px;top:613.20px;font-size:16.75px;line-height:19px;font-weight:normal;font-style:normal;color:#555555;white-space:pre;text-decoration:underline">SUB-FUNCTION</div>
<div style="position:absolute;left:1509.70px;top:613.20px;font-size:16.75px;line-height:19px;font-weight:normal;font-style:normal;color:#555555;white-space:pre;text-decoration:underline">OPP</div>
<div style="position:absolute;left:1565.50px;top:613.20px;font-size:16.75px;line-height:19px;font-weight:normal;font-style:normal;color:#555555;white-space:pre;text-decoration:underline">OUTCOME</div>
<div style="position:absolute;left:1673.00px;top:613.20px;font-size:16.75px;line-height:19px;font-weight:normal;font-style:normal;color:#555555;white-space:pre;text-decoration:underline">CGI DATA</div>
<div style="position:absolute;left:24.00px;top:642.00px;width:1793.00px;height:441.00px;background:#ffffff"></div>
<div style="position:absolute;left:33.00px;top:649.00px;font-size:19.5px;line-height:22px;font-weight:normal;font-style:normal;color:#000;white-space:pre;">32424</div>
<div style="position:absolute;left:113.60px;top:649.00px;font-size:19.5px;line-height:22px;font-weight:normal;font-style:normal;color:#000;white-space:pre;">0</div>
<div style="position:absolute;left:483.50px;top:649.00px;font-size:19.5px;line-height:22px;font-weight:normal;font-style:normal;color:#000;white-space:pre;">Hart, William S.</div>
<div style="position:absolute;left:643.40px;top:649.00px;font-size:19.5px;line-height:22px;font-weight:normal;font-style:normal;color:#000;white-space:pre;">192.168.240.123</div>
<div style="position:absolute;left:815.90px;top:649.00px;font-size:19.5px;line-height:22px;font-weight:normal;font-style:normal;color:#000;white-space:pre;">2023-11-13T21:49:50-0500</div>
<div style="position:absolute;left:1082.40px;top:649.00px;font-size:19.5px;line-height:22px;font-weight:normal;font-style:normal;color:#000;white-space:pre;">GET</div>
<div style="position:absolute;left:1212.40px;top:649.00px;font-size:19.5px;line-height:22px;font-weight:normal;font-style:normal;color:#000;white-space:pre;">chart</div>
<div style="position:absolute;left:1321.10px;top:649.00px;font-size:19.5px;line-height:22px;font-weight:normal;font-style:normal;color:#000;white-space:pre;">pat</div>
<div style="position:absolute;left:1566.10px;top:649.00px;font-size:19.5px;line-height:22px;font-weight:normal;font-style:normal;color:#000;white-space:pre;">Success</div>
<div style="position:absolute;left:1673.60px;top:649.00px;font-size:19.5px;line-height:22px;font-weight:normal;font-style:normal;color:#000;white-space:pre;"><span style="text-decoration:underline">View CGI Data</span></div>
<div style="position:absolute;left:24.00px;top:678.45px;width:1793.00px;height:36.45px;background:#f4f4f7"></div>
<div style="position:absolute;left:33.00px;top:685.45px;font-size:19.5px;line-height:22px;font-weight:normal;font-style:normal;color:#000;white-space:pre;">30333</div>
<div style="position:absolute;left:113.60px;top:685.45px;font-size:19.5px;line-height:22px;font-weight:normal;font-style:normal;color:#000;white-space:pre;">94</div>
<div style="position:absolute;left:207.50px;top:685.45px;font-size:19.5px;line-height:22px;font-weight:normal;font-style:normal;color:#000;white-space:pre;">dave</div>
<div style="position:absolute;left:325.00px;top:685.45px;font-size:19.5px;line-height:22px;font-weight:normal;font-style:normal;color:#000;white-space:pre;">David, Dave</div>
<div style="position:absolute;left:483.50px;top:685.45px;font-size:19.5px;line-height:22px;font-weight:normal;font-style:normal;color:#000;white-space:pre;">Hart, William S.</div>
<div style="position:absolute;left:643.40px;top:685.45px;font-size:19.5px;line-height:22px;font-weight:normal;font-style:normal;color:#000;white-space:pre;">192.168.240.123</div>
<div style="position:absolute;left:815.90px;top:685.45px;font-size:19.5px;line-height:22px;font-weight:normal;font-style:normal;color:#000;white-space:pre;">2023-11-13T18:57:37-0500</div>
<div style="position:absolute;left:1082.40px;top:685.45px;font-size:19.5px;line-height:22px;font-weight:normal;font-style:normal;color:#000;white-space:pre;">POST</div>
<div style="position:absolute;left:1212.40px;top:685.45px;font-size:19.5px;line-height:22px;font-weight:normal;font-style:normal;color:#000;white-space:pre;">edict</div>
<div style="position:absolute;left:1321.10px;top:685.45px;font-size:19.5px;line-height:22px;font-weight:normal;font-style:normal;color:#000;white-space:pre;">add</div>
<div style="position:absolute;left:1566.10px;top:685.45px;font-size:19.5px;line-height:22px;font-weight:normal;font-style:normal;color:#000;white-space:pre;">Success</div>
<div style="position:absolute;left:1673.60px;top:685.45px;font-size:19.5px;line-height:22px;font-weight:normal;font-style:normal;color:#000;white-space:pre;"><span style="text-decoration:underline">View CGI Data</span></div>
<div style="position:absolute;left:33.00px;top:721.90px;font-size:19.5px;line-height:22px;font-weight:normal;font-style:normal;color:#000;white-space:pre;">30327</div>
<div style="position:absolute;left:113.60px;top:721.90px;font-size:19.5px;line-height:22px;font-weight:normal;font-style:normal;color:#000;white-space:pre;">94</div>
<div style="position:absolute;left:207.50px;top:721.90px;font-size:19.5px;line-height:22px;font-weight:normal;font-style:normal;color:#000;white-space:pre;">dave</div>
<div style="position:absolute;left:325.00px;top:721.90px;font-size:19.5px;line-height:22px;font-weight:normal;font-style:normal;color:#000;white-space:pre;">David, Dave</div>
<div style="position:absolute;left:483.50px;top:721.90px;font-size:19.5px;line-height:22px;font-weight:normal;font-style:normal;color:#000;white-space:pre;">Hart, William S.</div>
<div style="position:absolute;left:643.40px;top:721.90px;font-size:19.5px;line-height:22px;font-weight:normal;font-style:normal;color:#000;white-space:pre;">192.168.240.123</div>
<div style="position:absolute;left:815.90px;top:721.90px;font-size:19.5px;line-height:22px;font-weight:normal;font-style:normal;color:#000;white-space:pre;">2023-11-13T18:57:14-0500</div>
<div style="position:absolute;left:1082.40px;top:721.90px;font-size:19.5px;line-height:22px;font-weight:normal;font-style:normal;color:#000;white-space:pre;">POST</div>
<div style="position:absolute;left:1212.40px;top:721.90px;font-size:19.5px;line-height:22px;font-weight:normal;font-style:normal;color:#000;white-space:pre;">edict</div>
<div style="position:absolute;left:1321.10px;top:721.90px;font-size:19.5px;line-height:22px;font-weight:normal;font-style:normal;color:#000;white-space:pre;">add</div>
<div style="position:absolute;left:1566.10px;top:721.90px;font-size:19.5px;line-height:22px;font-weight:normal;font-style:normal;color:#000;white-space:pre;">Success</div>
<div style="position:absolute;left:1673.60px;top:721.90px;font-size:19.5px;line-height:22px;font-weight:normal;font-style:normal;color:#000;white-space:pre;"><span style="text-decoration:underline">View CGI Data</span></div>
<div style="position:absolute;left:24.00px;top:751.35px;width:1793.00px;height:36.45px;background:#f4f4f7"></div>
<div style="position:absolute;left:33.00px;top:758.35px;font-size:19.5px;line-height:22px;font-weight:normal;font-style:normal;color:#000;white-space:pre;">30321</div>
<div style="position:absolute;left:113.60px;top:758.35px;font-size:19.5px;line-height:22px;font-weight:normal;font-style:normal;color:#000;white-space:pre;">94</div>
<div style="position:absolute;left:207.50px;top:758.35px;font-size:19.5px;line-height:22px;font-weight:normal;font-style:normal;color:#000;white-space:pre;">dave</div>
<div style="position:absolute;left:325.00px;top:758.35px;font-size:19.5px;line-height:22px;font-weight:normal;font-style:normal;color:#000;white-space:pre;">David, Dave</div>
<div style="position:absolute;left:483.50px;top:758.35px;font-size:19.5px;line-height:22px;font-weight:normal;font-style:normal;color:#000;white-space:pre;">Hart, William S.</div>
<div style="position:absolute;left:643.40px;top:758.35px;font-size:19.5px;line-height:22px;font-weight:normal;font-style:normal;color:#000;white-space:pre;">192.168.240.123</div>
<div style="position:absolute;left:815.90px;top:758.35px;font-size:19.5px;line-height:22px;font-weight:normal;font-style:normal;color:#000;white-space:pre;">2023-11-13T18:57:02-0500</div>
<div style="position:absolute;left:1082.40px;top:758.35px;font-size:19.5px;line-height:22px;font-weight:normal;font-style:normal;color:#000;white-space:pre;">POST</div>
<div style="position:absolute;left:1566.10px;top:758.35px;font-size:19.5px;line-height:22px;font-weight:normal;font-style:normal;color:#000;white-space:pre;">Success</div>
<div style="position:absolute;left:1673.60px;top:758.35px;font-size:19.5px;line-height:22px;font-weight:normal;font-style:normal;color:#000;white-space:pre;"><span style="text-decoration:underline">View CGI Data</span></div>
<div style="position:absolute;left:33.00px;top:794.80px;font-size:19.5px;line-height:22px;font-weight:normal;font-style:normal;color:#000;white-space:pre;">30320</div>
<div style="position:absolute;left:113.60px;top:794.80px;font-size:19.5px;line-height:22px;font-weight:normal;font-style:normal;color:#000;white-space:pre;">94</div>
<div style="position:absolute;left:207.50px;top:794.80px;font-size:19.5px;line-height:22px;font-weight:normal;font-style:normal;color:#000;white-space:pre;">dave</div>
<div style="position:absolute;left:325.00px;top:794.80px;font-size:19.5px;line-height:22px;font-weight:normal;font-style:normal;color:#000;white-space:pre;">David, Dave</div>
<div style="position:absolute;left:483.50px;top:794.80px;font-size:19.5px;line-height:22px;font-weight:normal;font-style:normal;color:#000;white-space:pre;">Hart, William S.</div>
<div style="position:absolute;left:643.40px;top:794.80px;font-size:19.5px;line-height:22px;font-weight:normal;font-style:normal;color:#000;white-space:pre;">192.168.240.123</div>
<div style="position:absolute;left:815.90px;top:794.80px;font-size:19.5px;line-height:22px;font-weight:normal;font-style:normal;color:#000;white-space:pre;">2023-11-13T18:57:02-0500</div>
<div style="position:absolute;left:1082.40px;top:794.80px;font-size:19.5px;line-height:22px;font-weight:normal;font-style:normal;color:#000;white-space:pre;">POST</div>
<div style="position:absolute;left:1566.10px;top:794.80px;font-size:19.5px;line-height:22px;font-weight:normal;font-style:normal;color:#000;white-space:pre;">Success</div>
<div style="position:absolute;left:1673.60px;top:794.80px;font-size:19.5px;line-height:22px;font-weight:normal;font-style:normal;color:#000;white-space:pre;"><span style="text-decoration:underline">View CGI Data</span></div>
<div style="position:absolute;left:24.00px;top:824.25px;width:1793.00px;height:36.45px;background:#f4f4f7"></div>
<div style="position:absolute;left:33.00px;top:831.25px;font-size:19.5px;line-height:22px;font-weight:normal;font-style:normal;color:#000;white-space:pre;">30319</div>
<div style="position:absolute;left:113.60px;top:831.25px;font-size:19.5px;line-height:22px;font-weight:normal;font-style:normal;color:#000;white-space:pre;">94</div>
<div style="position:absolute;left:207.50px;top:831.25px;font-size:19.5px;line-height:22px;font-weight:normal;font-style:normal;color:#000;white-space:pre;">dave</div>
<div style="position:absolute;left:325.00px;top:831.25px;font-size:19.5px;line-height:22px;font-weight:normal;font-style:normal;color:#000;white-space:pre;">David, Dave</div>
<div style="position:absolute;left:483.50px;top:831.25px;font-size:19.5px;line-height:22px;font-weight:normal;font-style:normal;color:#000;white-space:pre;">Hart, William S.</div>
<div style="position:absolute;left:643.40px;top:831.25px;font-size:19.5px;line-height:22px;font-weight:normal;font-style:normal;color:#000;white-space:pre;">192.168.240.123</div>
<div style="position:absolute;left:815.90px;top:831.25px;font-size:19.5px;line-height:22px;font-weight:normal;font-style:normal;color:#000;white-space:pre;">2023-11-13T18:57:02-0500</div>
<div style="position:absolute;left:1082.40px;top:831.25px;font-size:19.5px;line-height:22px;font-weight:normal;font-style:normal;color:#000;white-space:pre;">GET</div>
<div style="position:absolute;left:1212.40px;top:831.25px;font-size:19.5px;line-height:22px;font-weight:normal;font-style:normal;color:#000;white-space:pre;">ajaxget</div>
<div style="position:absolute;left:1321.10px;top:831.25px;font-size:19.5px;line-height:22px;font-weight:normal;font-style:normal;color:#000;white-space:pre;">incident</div>
<div style="position:absolute;left:1566.10px;top:831.25px;font-size:19.5px;line-height:22px;font-weight:normal;font-style:normal;color:#000;white-space:pre;">Success</div>
<div style="position:absolute;left:1673.60px;top:831.25px;font-size:19.5px;line-height:22px;font-weight:normal;font-style:normal;color:#000;white-space:pre;"><span style="text-decoration:underline">View CGI Data</span></div>
<div style="position:absolute;left:33.00px;top:867.70px;font-size:19.5px;line-height:22px;font-weight:normal;font-style:normal;color:#000;white-space:pre;">30302</div>
<div style="position:absolute;left:113.60px;top:867.70px;font-size:19.5px;line-height:22px;font-weight:normal;font-style:normal;color:#000;white-space:pre;">94</div>
<div style="position:absolute;left:207.50px;top:867.70px;font-size:19.5px;line-height:22px;font-weight:normal;font-style:normal;color:#000;white-space:pre;">dave</div>
<div style="position:absolute;left:325.00px;top:867.70px;font-size:19.5px;line-height:22px;font-weight:normal;font-style:normal;color:#000;white-space:pre;">David, Dave</div>
<div style="position:absolute;left:483.50px;top:867.70px;font-size:19.5px;line-height:22px;font-weight:normal;font-style:normal;color:#000;white-space:pre;">Hart, William S.</div>
<div style="position:absolute;left:643.40px;top:867.70px;font-size:19.5px;line-height:22px;font-weight:normal;font-style:normal;color:#000;white-space:pre;">192.168.240.123</div>
<div style="position:absolute;left:815.90px;top:867.70px;font-size:19.5px;line-height:22px;font-weight:normal;font-style:normal;color:#000;white-space:pre;">2023-11-13T18:56:56-0500</div>
<div style="position:absolute;left:1082.40px;top:867.70px;font-size:19.5px;line-height:22px;font-weight:normal;font-style:normal;color:#000;white-space:pre;">GET</div>
<div style="position:absolute;left:1212.40px;top:867.70px;font-size:19.5px;line-height:22px;font-weight:normal;font-style:normal;color:#000;white-space:pre;">chart</div>
<div style="position:absolute;left:1321.10px;top:867.70px;font-size:19.5px;line-height:22px;font-weight:normal;font-style:normal;color:#000;white-space:pre;">pat</div>
<div style="position:absolute;left:1566.10px;top:867.70px;font-size:19.5px;line-height:22px;font-weight:normal;font-style:normal;color:#000;white-space:pre;">Success</div>
<div style="position:absolute;left:1673.60px;top:867.70px;font-size:19.5px;line-height:22px;font-weight:normal;font-style:normal;color:#000;white-space:pre;"><span style="text-decoration:underline">View CGI Data</span></div>
<div style="position:absolute;left:24.00px;top:897.15px;width:1793.00px;height:36.45px;background:#f4f4f7"></div>
<div style="position:absolute;left:33.00px;top:904.15px;font-size:19.5px;line-height:22px;font-weight:normal;font-style:normal;color:#000;white-space:pre;">30280</div>
<div style="position:absolute;left:113.60px;top:904.15px;font-size:19.5px;line-height:22px;font-weight:normal;font-style:normal;color:#000;white-space:pre;">94</div>
<div style="position:absolute;left:207.50px;top:904.15px;font-size:19.5px;line-height:22px;font-weight:normal;font-style:normal;color:#000;white-space:pre;">dave</div>
<div style="position:absolute;left:325.00px;top:904.15px;font-size:19.5px;line-height:22px;font-weight:normal;font-style:normal;color:#000;white-space:pre;">David, Dave</div>
<div style="position:absolute;left:483.50px;top:904.15px;font-size:19.5px;line-height:22px;font-weight:normal;font-style:normal;color:#000;white-space:pre;">Hart, William S.</div>
<div style="position:absolute;left:643.40px;top:904.15px;font-size:19.5px;line-height:22px;font-weight:normal;font-style:normal;color:#000;white-space:pre;">192.168.240.123</div>
<div style="position:absolute;left:815.90px;top:904.15px;font-size:19.5px;line-height:22px;font-weight:normal;font-style:normal;color:#000;white-space:pre;">2023-11-13T18:56:26-0500</div>
<div style="position:absolute;left:1082.40px;top:904.15px;font-size:19.5px;line-height:22px;font-weight:normal;font-style:normal;color:#000;white-space:pre;">GET</div>
<div style="position:absolute;left:1212.40px;top:904.15px;font-size:19.5px;line-height:22px;font-weight:normal;font-style:normal;color:#000;white-space:pre;">chart</div>
<div style="position:absolute;left:1321.10px;top:904.15px;font-size:19.5px;line-height:22px;font-weight:normal;font-style:normal;color:#000;white-space:pre;">doc</div>
<div style="position:absolute;left:1566.10px;top:904.15px;font-size:19.5px;line-height:22px;font-weight:normal;font-style:normal;color:#000;white-space:pre;">Success</div>
<div style="position:absolute;left:1673.60px;top:904.15px;font-size:19.5px;line-height:22px;font-weight:normal;font-style:normal;color:#000;white-space:pre;"><span style="text-decoration:underline">View CGI Data</span></div>
<div style="position:absolute;left:33.00px;top:940.60px;font-size:19.5px;line-height:22px;font-weight:normal;font-style:normal;color:#000;white-space:pre;">30201</div>
<div style="position:absolute;left:113.60px;top:940.60px;font-size:19.5px;line-height:22px;font-weight:normal;font-style:normal;color:#000;white-space:pre;">94</div>
<div style="position:absolute;left:207.50px;top:940.60px;font-size:19.5px;line-height:22px;font-weight:normal;font-style:normal;color:#000;white-space:pre;">dave</div>
<div style="position:absolute;left:325.00px;top:940.60px;font-size:19.5px;line-height:22px;font-weight:normal;font-style:normal;color:#000;white-space:pre;">David, Dave</div>
<div style="position:absolute;left:483.50px;top:940.60px;font-size:19.5px;line-height:22px;font-weight:normal;font-style:normal;color:#000;white-space:pre;">Hart, William S.</div>
<div style="position:absolute;left:643.40px;top:940.60px;font-size:19.5px;line-height:22px;font-weight:normal;font-style:normal;color:#000;white-space:pre;">192.168.240.123</div>
<div style="position:absolute;left:815.90px;top:940.60px;font-size:19.5px;line-height:22px;font-weight:normal;font-style:normal;color:#000;white-space:pre;">2023-11-13T18:49:21-0500</div>
<div style="position:absolute;left:1082.40px;top:940.60px;font-size:19.5px;line-height:22px;font-weight:normal;font-style:normal;color:#000;white-space:pre;">POST</div>
<div style="position:absolute;left:1566.10px;top:940.60px;font-size:19.5px;line-height:22px;font-weight:normal;font-style:normal;color:#000;white-space:pre;">Success</div>
<div style="position:absolute;left:1673.60px;top:940.60px;font-size:19.5px;line-height:22px;font-weight:normal;font-style:normal;color:#000;white-space:pre;"><span style="text-decoration:underline">View CGI Data</span></div>
<div style="position:absolute;left:24.00px;top:970.05px;width:1793.00px;height:36.45px;background:#f4f4f7"></div>
<div style="position:absolute;left:33.00px;top:977.05px;font-size:19.5px;line-height:22px;font-weight:normal;font-style:normal;color:#000;white-space:pre;">30198</div>
<div style="position:absolute;left:113.60px;top:977.05px;font-size:19.5px;line-height:22px;font-weight:normal;font-style:normal;color:#000;white-space:pre;">94</div>
<div style="position:absolute;left:207.50px;top:977.05px;font-size:19.5px;line-height:22px;font-weight:normal;font-style:normal;color:#000;white-space:pre;">dave</div>
<div style="position:absolute;left:325.00px;top:977.05px;font-size:19.5px;line-height:22px;font-weight:normal;font-style:normal;color:#000;white-space:pre;">David, Dave</div>
<div style="position:absolute;left:483.50px;top:977.05px;font-size:19.5px;line-height:22px;font-weight:normal;font-style:normal;color:#000;white-space:pre;">Hart, William S.</div>
<div style="position:absolute;left:643.40px;top:977.05px;font-size:19.5px;line-height:22px;font-weight:normal;font-style:normal;color:#000;white-space:pre;">192.168.240.123</div>
<div style="position:absolute;left:815.90px;top:977.05px;font-size:19.5px;line-height:22px;font-weight:normal;font-style:normal;color:#000;white-space:pre;">2023-11-13T18:49:12-0500</div>
<div style="position:absolute;left:1082.40px;top:977.05px;font-size:19.5px;line-height:22px;font-weight:normal;font-style:normal;color:#000;white-space:pre;">POST</div>
<div style="position:absolute;left:1566.10px;top:977.05px;font-size:19.5px;line-height:22px;font-weight:normal;font-style:normal;color:#000;white-space:pre;">Success</div>
<div style="position:absolute;left:1673.60px;top:977.05px;font-size:19.5px;line-height:22px;font-weight:normal;font-style:normal;color:#000;white-space:pre;"><span style="text-decoration:underline">View CGI Data</span></div>
<div style="position:absolute;left:33.00px;top:1013.50px;font-size:19.5px;line-height:22px;font-weight:normal;font-style:normal;color:#000;white-space:pre;">30197</div>
<div style="position:absolute;left:113.60px;top:1013.50px;font-size:19.5px;line-height:22px;font-weight:normal;font-style:normal;color:#000;white-space:pre;">94</div>
<div style="position:absolute;left:207.50px;top:1013.50px;font-size:19.5px;line-height:22px;font-weight:normal;font-style:normal;color:#000;white-space:pre;">dave</div>
<div style="position:absolute;left:325.00px;top:1013.50px;font-size:19.5px;line-height:22px;font-weight:normal;font-style:normal;color:#000;white-space:pre;">David, Dave</div>
<div style="position:absolute;left:483.50px;top:1013.50px;font-size:19.5px;line-height:22px;font-weight:normal;font-style:normal;color:#000;white-space:pre;">Hart, William S.</div>
<div style="position:absolute;left:643.40px;top:1013.50px;font-size:19.5px;line-height:22px;font-weight:normal;font-style:normal;color:#000;white-space:pre;">192.168.240.123</div>
<div style="position:absolute;left:815.90px;top:1013.50px;font-size:19.5px;line-height:22px;font-weight:normal;font-style:normal;color:#000;white-space:pre;">2023-11-13T18:49:12-0500</div>
<div style="position:absolute;left:1082.40px;top:1013.50px;font-size:19.5px;line-height:22px;font-weight:normal;font-style:normal;color:#000;white-space:pre;">GET</div>
<div style="position:absolute;left:1212.40px;top:1013.50px;font-size:19.5px;line-height:22px;font-weight:normal;font-style:normal;color:#000;white-space:pre;">ajaxget</div>
<div style="position:absolute;left:1321.10px;top:1013.50px;font-size:19.5px;line-height:22px;font-weight:normal;font-style:normal;color:#000;white-space:pre;">incident</div>
<div style="position:absolute;left:1566.10px;top:1013.50px;font-size:19.5px;line-height:22px;font-weight:normal;font-style:normal;color:#000;white-space:pre;">Success</div>
<div style="position:absolute;left:1673.60px;top:1013.50px;font-size:19.5px;line-height:22px;font-weight:normal;font-style:normal;color:#000;white-space:pre;"><span style="text-decoration:underline">View CGI Data</span></div>
<div style="position:absolute;left:24.00px;top:1042.95px;width:1793.00px;height:36.45px;background:#f4f4f7"></div>
<div style="position:absolute;left:33.00px;top:1049.95px;font-size:19.5px;line-height:22px;font-weight:normal;font-style:normal;color:#000;white-space:pre;">30196</div>
<div style="position:absolute;left:113.60px;top:1049.95px;font-size:19.5px;line-height:22px;font-weight:normal;font-style:normal;color:#000;white-space:pre;">94</div>
<div style="position:absolute;left:207.50px;top:1049.95px;font-size:19.5px;line-height:22px;font-weight:normal;font-style:normal;color:#000;white-space:pre;">dave</div>
<div style="position:absolute;left:325.00px;top:1049.95px;font-size:19.5px;line-height:22px;font-weight:normal;font-style:normal;color:#000;white-space:pre;">David, Dave</div>
<div style="position:absolute;left:483.50px;top:1049.95px;font-size:19.5px;line-height:22px;font-weight:normal;font-style:normal;color:#000;white-space:pre;">Hart, William S.</div>
<div style="position:absolute;left:643.40px;top:1049.95px;font-size:19.5px;line-height:22px;font-weight:normal;font-style:normal;color:#000;white-space:pre;">192.168.240.123</div>
<div style="position:absolute;left:815.90px;top:1049.95px;font-size:19.5px;line-height:22px;font-weight:normal;font-style:normal;color:#000;white-space:pre;">2023-11-13T18:49:12-0500</div>
<div style="position:absolute;left:1082.40px;top:1049.95px;font-size:19.5px;line-height:22px;font-weight:normal;font-style:normal;color:#000;white-space:pre;">POST</div>
<div style="position:absolute;left:1566.10px;top:1049.95px;font-size:19.5px;line-height:22px;font-weight:normal;font-style:normal;color:#000;white-space:pre;">Success</div>
<div style="position:absolute;left:1673.60px;top:1049.95px;font-size:19.5px;line-height:22px;font-weight:normal;font-style:normal;color:#000;white-space:pre;"><span style="text-decoration:underline">View CGI Data</span></div>
</body></html>
